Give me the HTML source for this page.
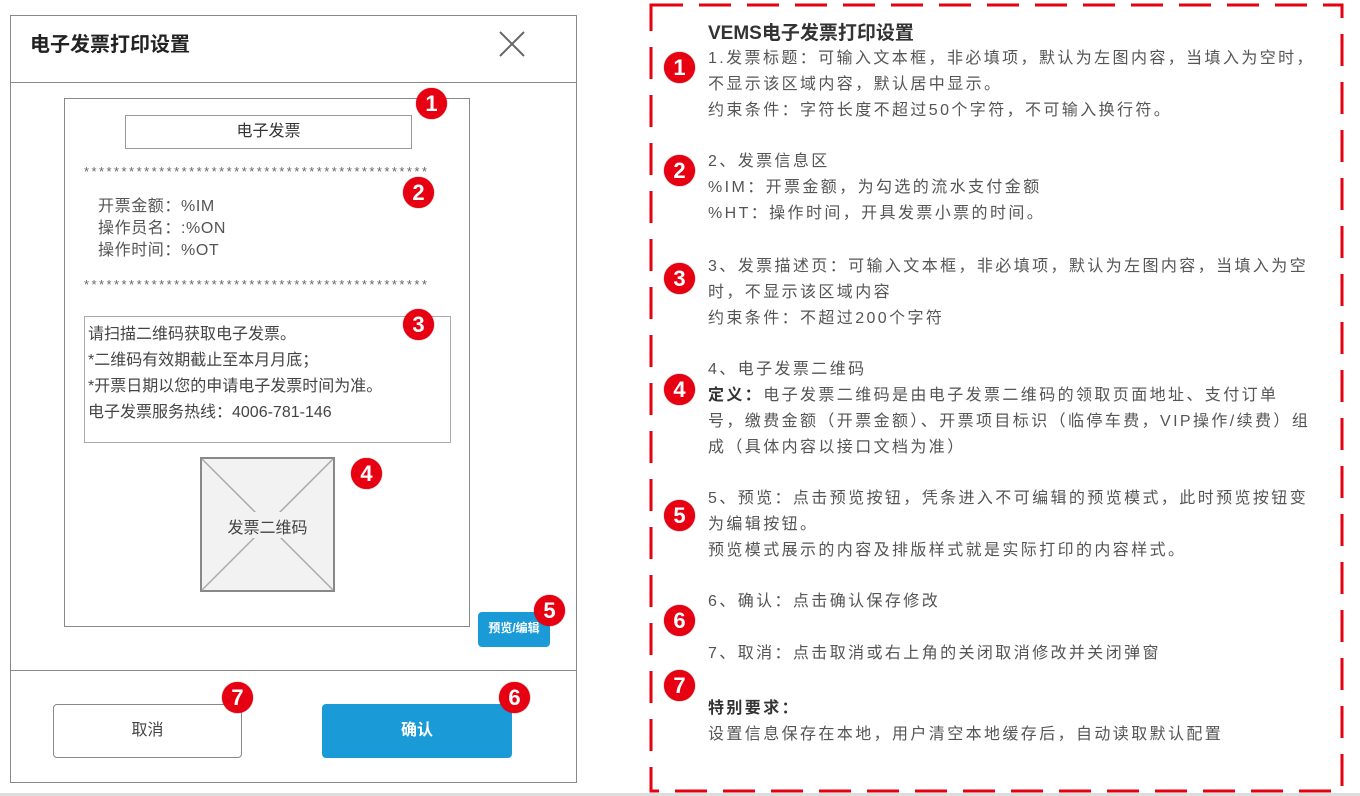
<!DOCTYPE html>
<html><head><meta charset="utf-8"><style>
*{margin:0;padding:0;box-sizing:border-box}
body{width:1360px;height:796px;background:#fff;position:relative;overflow:hidden;font-family:"Liberation Sans","Noto Sans CJK SC",sans-serif;color:#333}
.a{position:absolute;white-space:nowrap}
.b{position:absolute;width:31px;height:31px;border-radius:50%;background:#e60012;color:#fff;font:bold 22px/31px "Liberation Sans",sans-serif;text-align:center;box-shadow:0 0 1px #900}
.t{font-size:16px;color:#555;line-height:20px;letter-spacing:2.4px}
.l{font-size:16px;color:#555;line-height:22px;letter-spacing:0.6px}
.s{font-size:13px;color:#666;letter-spacing:2.45px}
</style></head><body>
<div class="a" style="left:10px;top:15px;width:567px;height:768px;border:1px solid #888"></div>
<div class="a" style="left:10px;top:82px;width:567px;border-top:1px solid #888"></div>
<div class="a" style="left:10px;top:670px;width:567px;border-top:1px solid #888"></div>
<div class="a" style="left:30px;top:28px;font-size:20px;color:#222;font-weight:bold">电子发票打印设置</div>
<svg class="a" style="left:498px;top:30px" width="28" height="28"><path d="M2 2L26 26M26 2L2 26" stroke="#666" stroke-width="2"/></svg>
<div class="a" style="left:64px;top:98px;width:406px;height:529px;border:1px solid #888"></div>
<div class="a" style="left:125px;top:115px;width:287px;height:34px;border:1px solid #999;text-align:center;font-size:16px;line-height:32px;color:#333">电子发票</div>
<div class="a s" style="left:84px;top:164px">**********************************************</div>
<div class="a s" style="left:84px;top:277px">**********************************************</div>
<div class="a l" style="left:98px;top:196px">开票金额：%IM<br>操作员名：:%ON<br>操作时间：%OT</div>
<div class="a" style="left:84px;top:316px;width:367px;height:127px;border:1px solid #aaa"></div>
<div class="a" style="left:88px;top:322px;font-size:16px;color:#444;line-height:26px">请扫描二维码获取电子发票。<br>*二维码有效期截止至本月月底；<br>*开票日期以您的申请电子发票时间为准。<br>电子发票服务热线：4006-781-146</div>
<svg class="a" style="left:200px;top:457px" width="135" height="135"><rect x="1" y="1" width="133" height="133" fill="#f2f2f2" stroke="#888" stroke-width="2"/><path d="M2 2L133 133M133 2L2 133" stroke="#aaa" stroke-width="1.5"/><rect x="20" y="55" width="95" height="26" fill="#f2f2f2"/></svg>
<div class="a" style="left:200px;top:514px;width:135px;text-align:center;font-size:16px;color:#444">发票二维码</div>
<div class="a" style="left:478px;top:612px;width:72px;height:35px;background:#1a9bd7;border-radius:4px;color:#fff;font-size:12px;font-weight:bold;line-height:33px;text-align:center">预览/编辑</div>
<div class="a" style="left:53px;top:704px;width:189px;height:54px;border:1px solid #888;border-radius:4px;text-align:center;line-height:52px;font-size:16px;color:#444">取消</div>
<div class="a" style="left:322px;top:704px;width:190px;height:54px;background:#1a9bd7;border-radius:4px;text-align:center;line-height:54px;font-size:16px;color:#fff;font-weight:bold">确认</div>
<div class="b" style="left:416px;top:88px">1</div>
<div class="b" style="left:403px;top:177px">2</div>
<div class="b" style="left:403px;top:309px">3</div>
<div class="b" style="left:351px;top:458px">4</div>
<div class="b" style="left:534px;top:595px">5</div>
<div class="b" style="left:499px;top:682px">6</div>
<div class="b" style="left:222px;top:682px">7</div>
<div class="a" style="left:0;top:793px;width:1360px;height:3px;background:#ddd"></div>
<svg class="a" style="left:648px;top:3px" width="698" height="790"><rect x="3" y="2" width="691" height="786" fill="none" stroke="#e60012" stroke-width="3" stroke-dasharray="32 16"/></svg>
<div class="a" style="left:708px;top:18px;font-size:19px;font-weight:bold;color:#333">VEMS电子发票打印设置</div>
<div class="a t" style="left:708px;top:46px;line-height:26px">1.发票标题：可输入文本框，非必填项，默认为左图内容，当填入为空时，<br>不显示该区域内容，默认居中显示。<br>约束条件：字符长度不超过50个字符，不可输入换行符。</div>
<div class="a t" style="left:708px;top:149px;line-height:26px">2、发票信息区<br>%IM：开票金额，为勾选的流水支付金额<br>%HT：操作时间，开具发票小票的时间。</div>
<div class="a t" style="left:708px;top:254px;line-height:26px">3、发票描述页：可输入文本框，非必填项，默认为左图内容，当填入为空<br>时，不显示该区域内容<br>约束条件：不超过200个字符</div>
<div class="a t" style="left:708px;top:357px;line-height:26px">4、电子发票二维码<br><b style="color:#333">定义：</b>电子发票二维码是由电子发票二维码的领取页面地址、支付订单<br>号，缴费金额（开票金额）、开票项目标识（临停车费，VIP操作/续费）组<br>成（具体内容以接口文档为准）</div>
<div class="a t" style="left:708px;top:486px;line-height:26px">5、预览：点击预览按钮，凭条进入不可编辑的预览模式，此时预览按钮变<br>为编辑按钮。<br>预览模式展示的内容及排版样式就是实际打印的内容样式。</div>
<div class="a t" style="left:708px;top:592px">6、确认：点击确认保存修改</div>
<div class="a t" style="left:708px;top:644px">7、取消：点击取消或右上角的关闭取消修改并关闭弹窗</div>
<div class="a t" style="left:708px;top:696px;line-height:26px"><b style="color:#333">特别要求：</b><br>设置信息保存在本地，用户清空本地缓存后，自动读取默认配置</div>
<div class="b" style="left:664px;top:52px">1</div>
<div class="b" style="left:664px;top:155px">2</div>
<div class="b" style="left:664px;top:263px">3</div>
<div class="b" style="left:664px;top:374px">4</div>
<div class="b" style="left:664px;top:500px">5</div>
<div class="b" style="left:664px;top:605px">6</div>
<div class="b" style="left:664px;top:670px">7</div>
</body></html>
